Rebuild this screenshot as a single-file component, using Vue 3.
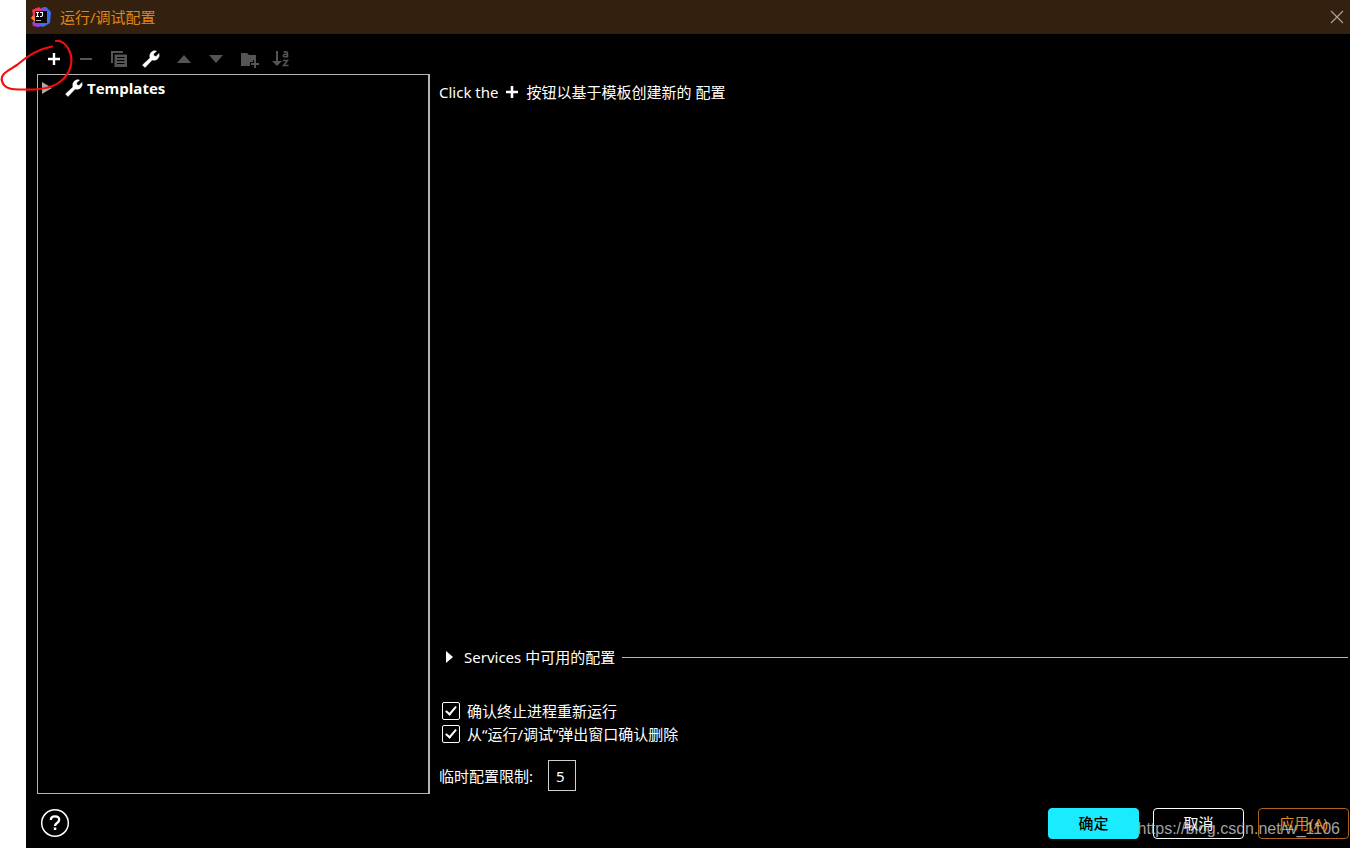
<script setup>
import { ref } from 'vue'

const confirmRerun = ref(true)
const confirmDelete = ref(true)
const limit = ref('5')
</script>

<template>
  <div class="page">
    <section class="dialog" role="dialog" aria-labelledby="dialog-title">
      <header class="titlebar">
        <svg class="logo" width="20" height="20" viewBox="0 0 20 20" aria-hidden="true">
          <path d="M1 3L8 0L13 5L7 19L2 17L3 12L0 11L2 8Z" fill="#f5335d" />
          <path d="M0 11L3 8L5 15L3 14Z" fill="#fb8a25" />
          <path d="M1 16L7 12L12 19L7 20L2 19Z" fill="#a13bd6" />
          <path d="M10 1L15 0L20 5L19 16L12 20L7 17L10 9Z" fill="#3b6ff0" />
          <path d="M10 1L15 0L17 4L10 5Z" fill="#6a56dc" />
          <rect x="4" y="4" width="12" height="12" fill="#0b0709" />
          <path d="M5 5.500H8M6.500 5.500V9.500M5 9.500H8M9 5.500H11.500V8.300Q11.500 9.500 10.300 9.500H9" fill="none" stroke="#fff" stroke-width="1.100" />
          <path d="M5 13.500H10" stroke="#bbb" stroke-width="1" />
        </svg>
        <h1 id="dialog-title">运行/调试配置</h1>
        <button class="close" type="button" aria-label="关闭">
          <svg width="14" height="14" viewBox="0 0 14 14"><path d="M1 1L13 13M13 1L1 13" stroke="#aaa39b" stroke-width="1.200" /></svg>
        </button>
      </header>

      <main class="body">
        <div class="side">
          <div class="toolbar">
            <button type="button" aria-label="添加"><svg width="20" height="20" viewBox="0 0 20 20"><path d="M10 4V16M4 10H16" stroke="#fff" stroke-width="2.400" /></svg></button>
            <button type="button" aria-label="移除" disabled><svg width="20" height="20" viewBox="0 0 20 20"><path d="M4 10H16" stroke="#555" stroke-width="2" /></svg></button>
            <button type="button" aria-label="复制" disabled>
              <svg width="20" height="20" viewBox="0 0 20 20">
                <path d="M3 14V3H14" fill="none" stroke="#555" stroke-width="2" />
                <path d="M5.500 5.500H18V18H5.500Z" fill="#555" />
                <path d="M8 8.500H15.500M8 11.500H15.500M8 14.500H15.500" stroke="#000" stroke-width="1" />
              </svg>
            </button>
            <button type="button" aria-label="编辑模板">
              <svg width="20" height="20" viewBox="0 0 20 20"><path d="M1.500 16L9 9Q8 5.500 10.500 3Q12.800 1 15.500 2L12.500 5L13 7L15 7.500L18 4.500Q19 7.500 16.800 9.800Q14.500 12 11.200 11L4 18.500Z" fill="#fff" stroke="#fff" stroke-width="0.500" /></svg>
            </button>
            <button type="button" aria-label="上移" disabled><svg width="20" height="20" viewBox="0 0 20 20"><path d="M3 14L10 6L17 14Z" fill="#555" /></svg></button>
            <button type="button" aria-label="下移" disabled><svg width="20" height="20" viewBox="0 0 20 20"><path d="M3 6H17L10 14Z" fill="#555" /></svg></button>
            <button type="button" aria-label="新建文件夹" disabled>
              <svg width="20" height="20" viewBox="0 0 20 20">
                <path d="M2 4H8L10 6H17V11H14V13H11V17H2Z" fill="#555" />
                <path d="M16 11V19M12 15H20" stroke="#555" stroke-width="2" />
              </svg>
            </button>
            <button type="button" aria-label="排序" disabled>
              <svg width="20" height="20" viewBox="0 0 20 20">
                <path d="M6 2V15" stroke="#555" stroke-width="2" />
                <path d="M1 12H11L6 17Z" fill="#555" />
                <path d="M12.500 3.300Q16.500 1.700 16.500 4.500V8.500M16.500 5.200H14.500Q12.300 5.300 12.300 6.800Q12.500 8 14 8Q16 8 16.500 6.300M12 11.500H16.500L12.500 16.500H17.500" fill="none" stroke="#555" stroke-width="1.500" />
              </svg>
            </button>
          </div>
          <div class="tree" role="tree">
            <div class="node" role="treeitem" aria-expanded="false">
              <svg class="arrow" width="10" height="12" viewBox="0 0 10 12" aria-hidden="true"><path d="M0 0L10 6L0 12Z" fill="#aaa" /></svg>
              <svg width="20" height="20" viewBox="0 0 20 20" aria-hidden="true"><path d="M1.500 16L9 9Q8 5.500 10.500 3Q12.800 1 15.500 2L12.500 5L13 7L15 7.500L18 4.500Q19 7.500 16.800 9.800Q14.500 12 11.200 11L4 18.500Z" fill="#fff" stroke="#fff" stroke-width="0.500" /></svg>
              <span>Templates</span>
            </div>
          </div>
        </div>

        <div class="content">
          <p class="hint">
            <span>Click the</span>
            <svg width="14" height="14" viewBox="0 0 14 14" aria-hidden="true"><path d="M7 1V13M1 7H13" stroke="#fff" stroke-width="2.600" /></svg>
            <span>按钮以基于模板创建新的 配置</span>
          </p>
          <button class="services" type="button" aria-expanded="false">
            <svg width="7" height="12" viewBox="0 0 7 12" aria-hidden="true"><path d="M0 0L7 6L0 12Z" fill="#fff" /></svg>
            <span>Services 中可用的配置</span>
            <i class="rule"></i>
          </button>
          <div class="checks">
            <label><input v-model="confirmRerun" type="checkbox"><span>确认终止进程重新运行</span></label>
            <label><input v-model="confirmDelete" type="checkbox"><span>从“运行/调试”弹出窗口确认删除</span></label>
          </div>
          <div class="limit">
            <label for="limit">临时配置限制:</label>
            <input id="limit" v-model="limit" type="text" inputmode="numeric">
          </div>
        </div>
      </main>

      <footer class="footer">
        <button class="help" type="button" aria-label="帮助">
          <svg width="30" height="30" viewBox="0 0 30 30">
            <circle cx="15" cy="15" r="13.300" fill="none" stroke="#fff" stroke-width="1.500" />
            <path d="M10.800 12Q10.800 8.300 15 8.300Q19.200 8.300 19.200 11.700Q19.200 13.300 17.300 14.700Q15 16.200 15 18" fill="none" stroke="#fff" stroke-width="2.300" />
            <rect x="13.800" y="19.500" width="2.500" height="2.500" fill="#fff" />
          </svg>
        </button>
        <button class="btn primary" type="button">确定</button>
        <button class="btn" type="button">取消</button>
        <button class="btn apply" type="button">应用(A)</button>
      </footer>
    </section>

    <svg class="scribble" width="80" height="100" viewBox="0 0 80 100" aria-hidden="true">
      <path d="M52 46.500C38 49 26 57 17 65C8 71 0 74 2 81C4 90 15 89.500 24 89.500C39 90 53 88 61 81C71 73 74 60 69 50C66 44 61 40 56 41" fill="none" stroke="#f50d0d" stroke-width="2.200" stroke-linecap="round" />
    </svg>
    <span class="watermark">https://blog.csdn.net/w_1106</span>
  </div>
</template>

<style>
body {
  margin: 0;
  background: #fff;
}
</style>

<style scoped>
.page {
  position: relative;
  box-sizing: border-box;
  min-height: 100vh;
  padding-left: 26px;
  display: flex;
  overflow: hidden;
  font-family: "Noto Sans", "Noto Sans CJK SC", sans-serif;
  font-size: 15px;
  line-height: 22px;
  color: #fff;
}
button {
  padding: 0;
  border: 0;
  background: none;
  color: inherit;
  font: inherit;
}
svg {
  display: block;
  flex: none;
}
.dialog {
  flex: 1;
  display: flex;
  flex-direction: column;
  background: #000;
}
.titlebar {
  display: flex;
  align-items: center;
  height: 34px;
  padding: 0 6px 0 5px;
  background: #33200e;
  color: #e08519;
}
h1 {
  flex: 1;
  margin: 0 0 0 9px;
  font-size: 15px;
  font-weight: 400;
}
.body {
  flex: 1;
  display: flex;
}
.side {
  display: flex;
  flex-direction: column;
  width: 393px;
  margin-left: 11px;
}
.toolbar {
  display: flex;
  justify-content: space-between;
  align-items: center;
  width: 259px;
  height: 40px;
  margin-left: 1px;
  padding-top: 9px;
  box-sizing: border-box;
}
.toolbar button {
  display: flex;
  justify-content: center;
  width: 32px;
}
.tree {
  flex: 1;
  border: 1px solid #b4b4b4;
  border-right-width: 2px;
}
.node {
  display: flex;
  align-items: center;
  height: 26px;
  padding-left: 4px;
  font-family: "Open Sans", sans-serif;
  font-weight: 700;
}
.arrow {
  margin-right: 12px;
}
.node span {
  margin-left: 3px;
}
.content {
  flex: 1;
  display: flex;
  flex-direction: column;
  padding: 47px 2px 3px 9px;
}
.hint {
  display: flex;
  align-items: center;
  gap: 7px;
  margin: 0;
}
.services {
  display: flex;
  align-items: center;
  margin-top: auto;
  padding-left: 7px;
  text-align: left;
}
.services span {
  margin-left: 11px;
}
.rule {
  flex: 1;
  height: 1px;
  margin-left: 7px;
  background: #b4b4b4;
}
.checks {
  margin: 31px 0 15px 3px;
}
.checks label {
  display: flex;
  align-items: center;
  height: 23px;
  gap: 7px;
}
.checks input {
  appearance: none;
  position: relative;
  box-sizing: border-box;
  width: 18px;
  height: 18px;
  margin: 0;
  border: 1px solid #fff;
  border-radius: 2px;
}
.checks input:checked::after {
  content: "";
  position: absolute;
  left: 5px;
  top: 1px;
  width: 4px;
  height: 9px;
  border: solid #fff;
  border-width: 0 2px 2px 0;
  transform: rotate(40deg);
}
.limit {
  display: flex;
  align-items: center;
  gap: 15px;
}
.limit input {
  box-sizing: border-box;
  width: 28px;
  height: 31px;
  padding: 0 7px;
  border: 1px solid #d0d0d0;
  border-radius: 0;
  background: #000;
  color: #fff;
  font: inherit;
}
.footer {
  display: flex;
  align-items: center;
  gap: 14px;
  height: 54px;
  padding: 0 1px 4px 14px;
  box-sizing: border-box;
}
.help {
  margin: 8px auto 0 0;
}
.btn {
  box-sizing: border-box;
  width: 91px;
  height: 31px;
  margin-top: 8px;
  border: 1px solid #fff;
  border-radius: 4px;
}
.primary {
  border-color: #1aebff;
  background: #1aebff;
  color: #000;
  font-weight: 500;
}
.apply {
  border-color: #a8621c;
  color: #e08519;
}
.scribble {
  position: absolute;
  left: 0;
  top: 0;
  pointer-events: none;
}
.watermark {
  position: absolute;
  right: 10px;
  bottom: 8px;
  font-family: "Liberation Sans", sans-serif;
  font-size: 16px;
  color: rgba(205, 205, 205, 0.8);
  pointer-events: none;
}
</style>
